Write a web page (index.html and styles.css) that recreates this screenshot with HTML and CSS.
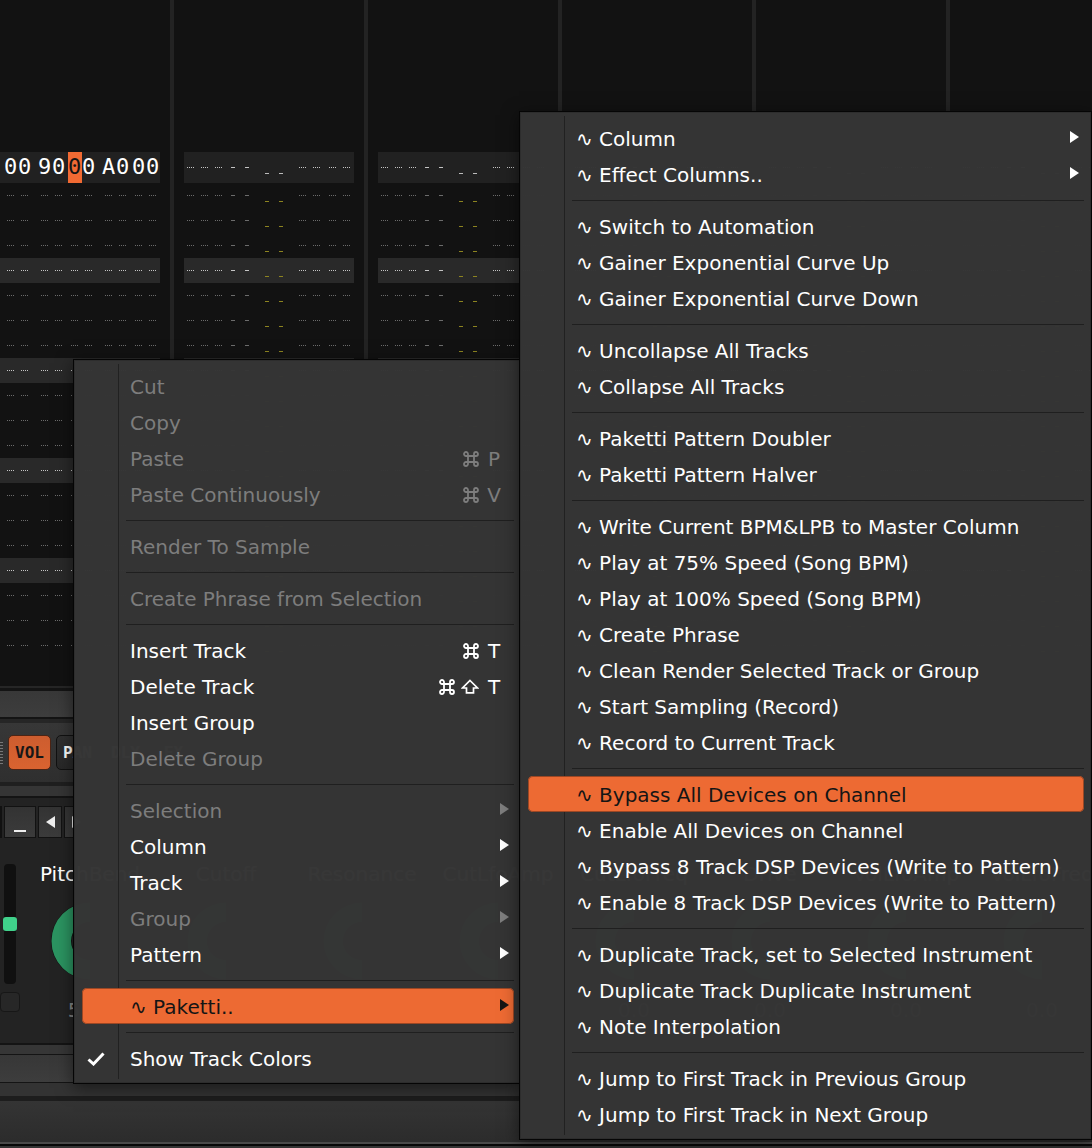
FILE: index.html
```html
<!DOCTYPE html>
<html lang="en">
<head>
<meta charset="utf-8">
<title>Pattern Editor</title>
<link rel="stylesheet" href="styles.css">
</head>
<body>
<svg class="defs" aria-hidden="true">
  <symbol id="cmd" viewBox="0 0 16 16"><path d="M5 5H11V11H5ZM5 5V3A2 2 0 1 0 3 5H5M11 5H13A2 2 0 1 0 11 3V5M11 11V13A2 2 0 1 0 13 11H11M5 11H3A2 2 0 1 0 5 13V11" fill="none" stroke="currentColor" stroke-width="1.8"/></symbol>
  <symbol id="shift" viewBox="0 0 18 16"><path d="M9 1.5L16.5 9H12.5V13.8H5.5V9H1.5Z" fill="none" stroke="currentColor" stroke-width="1.7"/></symbol>
  <symbol id="arrow" viewBox="0 0 9 12"><path d="M0 0L9 6L0 12Z" fill="currentColor"/></symbol>
  <symbol id="check" viewBox="0 0 18 14"><path d="M1.5 7.5L6.5 12L16.5 1.5" fill="none" stroke="currentColor" stroke-width="3"/></symbol>
  <symbol id="dial" viewBox="0 0 78 78"><circle cx="39" cy="39" r="39" fill="#141414"/><path d="M39 77.5A38.5 38.5 0 1 1 39 .5V20A19 19 0 1 0 39 58Z" fill="#2b9461"/><circle cx="39" cy="39" r="18" fill="#2a2a2a"/></symbol>
</svg>
<main class="app">
  <section class="tracks" id="tracks" aria-label="Pattern"></section>
  <div class="scrollbar"></div>
  <div class="toolbar">
    <span class="grip"></span>
    <button class="tool on">VOL</button>
    <button class="tool">PAN</button>
    <button class="tool">DLY</button>
    <button class="tool">FX</button>
  </div>
  <div class="strip"></div>
  <section class="devices">
    <div class="device-head">
      <span class="stub"></span>
      <button class="mini" aria-label="Minimize"><span class="minimize"></span></button>
      <button class="mini narrow" aria-label="Previous"><svg class="flip" width="9" height="12"><use href="#arrow"/></svg></button>
      <button class="mini narrow" aria-label="Next"><svg width="9" height="12"><use href="#arrow"/></svg></button>
      <span class="device-name">*Instr. Macros</span>
    </div>
    <div class="device-body">
      <div class="mixer"><div class="slider"><span class="thumb"></span></div><span class="box"></span></div>
      <div class="knobs" id="knobs"></div>
    </div>
  </section>
  <div class="gap-bar"></div>
  <div class="scroll-low"></div>
  <div class="gap-bar last"></div>
  <footer class="footer"></footer>
</main>
<div class="menu main-menu" role="menu" id="main-menu"></div>
<div class="menu sub-menu" role="menu" id="sub-menu"></div>
<script src="app.js"></script>
</body>
</html>
```
FILE: styles.css
```css
* { box-sizing: border-box; }
body {
  margin: 0;
  min-height: 100vh;
  background: #111;
  color: #fff;
  font: 20px/36px "DejaVu Sans", sans-serif;
  position: relative;
  overflow-x: hidden;
}
button { font: inherit; color: inherit; border: 0; padding: 0; background: none; }
.defs { position: absolute; width: 0; height: 0; }
.app { display: flex; flex-direction: column; min-height: 100vh; overflow: hidden; }

.tracks { display: flex; height: 686px; background: #121212; overflow: hidden; }
.track { flex: none; padding: 152px 10px 0; border-right: 4px solid #232323; }
.track:first-child { padding-left: 0; }
.row { display: flex; gap: 6px; height: 25px; color: #6c6c6c; }
.track:first-child .row { padding-left: 4px; }
.row.current { height: 31px; background: #212121; color: #c4c4c4; }
.row.beat { background: #292929; color: #c4c4c4; }
.pair { display: flex; gap: 2px; }
.group { display: flex; }
.cell { width: 14px; padding: 12px 0 0 3px; }
.current .cell { padding-top: 15px; }
.dots, .dash { display: block; height: 1px; }
.dots { width: 7px; background: repeating-linear-gradient(90deg, currentColor 0 1px, transparent 1px 2px); }
.dash { width: 4px; background: currentColor; }
.pair.low { padding-top: 6px; color: #8d8420; }
.current .low { color: #bbb; }
.current .digit { padding: 0; color: #fff; font: 22px/30px "DejaVu Sans Mono", monospace; }
.current .cursor { background: #f16a33; color: #141414; }

.scrollbar { height: 33px; border-top: 2px solid #262626; border-bottom: 2px solid #141414; background: linear-gradient(#141414 0 3px, #383838 3px, #3d3d3d); }
.toolbar { display: flex; align-items: center; gap: 5px; height: 63px; border-top: 4px solid #262626; background: linear-gradient(#373737, #2f2f2f); }
.grip { width: 3px; height: 22px; background: repeating-linear-gradient(#777 0 1px, transparent 1px 3px); }
.tool { width: 43px; height: 35px; border: 1px solid #111; border-radius: 5px; background: linear-gradient(#303030, #282828); font: bold 16px/32px "DejaVu Sans Mono", monospace; }
.tool.on { background: linear-gradient(#cd5d2f, #d96330); color: #171717; border-color: #4d2414; }
.strip { height: 16px; border-top: 4px solid #1f1f1f; border-bottom: 2px solid #141414; background: #353535; }
.devices { height: 245px; background: #232323; padding-top: 8px; overflow: hidden; }
.device-head { display: flex; gap: 2px; height: 32px; }
.stub { width: 2px; background: #111; }
.mini { width: 32px; height: 32px; border: 1px solid #121212; background: linear-gradient(#333, #3b3b3b); display: flex; align-items: center; justify-content: center; }
.mini.narrow { width: 24px; }
.mini svg { color: #eee; }
.flip { transform: scaleX(-1); }
.minimize { width: 12px; height: 2px; margin-top: 18px; background: #eee; }
.device-name { padding-left: 46px; font-weight: bold; color: #151515; }
.device-body { display: flex; gap: 2px; padding-top: 18px; }
.mixer { flex: none; width: 20px; display: flex; flex-direction: column; align-items: center; gap: 8px; padding-top: 8px; }
.slider { width: 12px; height: 120px; background: #101010; border-radius: 4px; display: flex; align-items: center; justify-content: center; }
.thumb { flex: none; width: 14px; height: 14px; border-radius: 3px; background: #40d18b; }
.box { width: 20px; height: 20px; border: 1px solid #171717; border-radius: 4px; background: #272727; }
.knobs { display: flex; }
.knob-cell { flex: none; width: 136px; display: flex; flex-direction: column; align-items: center; gap: 10px; }
.value { color: #888; line-height: 40px; }
.gap-bar { height: 11px; border-top: 2px solid #141414; background: #363636; }
.scroll-low { height: 29px; border: solid #141414; border-width: 1px 0; background: linear-gradient(#373737, #3d3d3d); }
.gap-bar.last { height: 18px; border-top: 0; border-bottom: 5px solid #1d1d1d; background: #333; }
.footer { flex: 1; min-height: 47px; background: linear-gradient(#343434, #2b2b2b); border-bottom: 2px solid #343434; box-shadow: inset 0 -2px #080808, inset 0 -4px #4a4a4a; }

.menu {
  position: absolute;
  display: flex;
  flex-direction: column;
  padding: 8px 7px 7px 8px;
  border: 1px solid #050505;
  background: rgba(53, 53, 53, .99);
  box-shadow: inset 0 0 0 1px #2d2d2d, 0 4px 16px rgba(0, 0, 0, .5);
}
.menu::before { content: ""; position: absolute; left: 44px; top: 4px; bottom: 4px; width: 1px; background: #212121; }
.main-menu { left: 73px; top: 359px; width: 449px; }
.sub-menu { left: 519px; top: 111px; right: 0; }
.item { position: relative; flex: none; display: flex; align-items: center; height: 36px; padding: 2px 13px 0 48px; text-align: left; white-space: nowrap; }
.label { flex: 1; }
.item:disabled { color: #7d7d7d; }
.item.hot { border-radius: 5px; background: #ed6a33; color: #151515; box-shadow: inset 0 0 0 1px #9c4724; }
.keys { display: flex; align-items: center; gap: 6px; }
.keys .letter { width: 14px; text-align: center; }
.keys svg + .letter { margin-left: 2px; }
.item .arrow { margin-right: -8px; margin-bottom: 4px; }
.check { position: absolute; left: 5px; top: 12px; }
.sep { flex: none; height: 1px; margin: 8px 0 7px 44px; border: 0; background: #1f1f1f; }
```
FILE: app.js
```js
const repeat = (n, s) => Array(n).fill(s).join("");
const cell = (kind) => `<span class="cell"><i class="${kind}"></i></span>`;
const group = (n, kind) => `<div class="group">${repeat(n, cell(kind))}</div>`;
const fx = `<div class="pair">${group(2, "dots")}${group(2, "dots")}</div>`;
const digit = (c) => `<span class="cell digit">${c}</span>`;
const digits = (s) => `<div class="group">${[...s].map(digit).join("")}</div>`;

const typedRow = `${digits("00")}<div class="pair">${digits("90")}<div class="group"><span class="cell digit cursor">0</span>${digit("0")}</div></div><div class="pair">${digits("A0")}${digits("00")}</div>`;
const fxRow = group(2, "dots") + fx + fx;
const noteRow = `<div class="pair">${group(3, "dots")}${group(2, "dash")}</div><div class="pair low">${group(2, "dash")}</div>${fx}`;

const track = (first) => {
  let rows = "";
  for (let i = 0; i < 20; i++) {
    const kind = i === 0 ? "current" : i % 4 === 0 ? "beat" : "";
    const body = !first ? noteRow : i === 0 ? typedRow : fxRow;
    rows += `<div class="row ${kind}">${body}</div>`;
  }
  return `<div class="track">${rows}</div>`;
};
document.getElementById("tracks").innerHTML = track(true) + repeat(5, track(false));

const macros = ["PitchBend", "Cutoff", "Resonance", "CutLfoAmp", "CutLfoFreq", "Drive", "VolLfoAmp", "VolLfoFreq"];
document.getElementById("knobs").innerHTML = macros.map((name, i) =>
  `<div class="knob-cell"><span>${name}</span><svg width="78" height="78"><use href="#dial"/></svg><span class="value">${i ? "0.0" : "50.0"}</span></div>`
).join("");

const keyIcons = {
  "⌘": '<svg width="16" height="16"><use href="#cmd"/></svg>',
  "⇧": '<svg width="18" height="16"><use href="#shift"/></svg>'
};
// Item flags: off = disabled, sub = opens a submenu, hot = highlighted, check = ticked.
const item = ([label, flags = "", keys = ""]) => {
  const has = (f) => flags.includes(f);
  const keyHtml = [...keys].map((k) => keyIcons[k] || `<span class="letter">${k}</span>`).join("");
  return `<button role="menuitem" class="item ${has("hot") ? "hot" : ""}" ${has("off") ? "disabled" : ""}>` +
    (has("check") ? '<svg class="check" width="18" height="14"><use href="#check"/></svg>' : "") +
    `<span class="label">${label.replace("&", "&amp;")}</span>` +
    (keys ? `<span class="keys">${keyHtml}</span>` : "") +
    (has("sub") ? '<svg class="arrow" width="9" height="12"><use href="#arrow"/></svg>' : "") +
    "</button>";
};
const fill = (id, groups) => {
  document.getElementById(id).innerHTML = groups.map((g) => g.map(item).join("")).join('<hr class="sep">');
};

fill("main-menu", [
  [["Cut", "off"], ["Copy", "off"], ["Paste", "off", "⌘P"], ["Paste Continuously", "off", "⌘V"]],
  [["Render To Sample", "off"]],
  [["Create Phrase from Selection", "off"]],
  [["Insert Track", "", "⌘T"], ["Delete Track", "", "⌘⇧T"], ["Insert Group"], ["Delete Group", "off"]],
  [["Selection", "off sub"], ["Column", "sub"], ["Track", "sub"], ["Group", "off sub"], ["Pattern", "sub"]],
  [["∿ Paketti..", "hot sub"]],
  [["Show Track Colors", "check"]]
]);
const tool = (label, flags) => ["∿ " + label, flags];
fill("sub-menu", [
  [tool("Column", "sub"), tool("Effect Columns..", "sub")],
  [tool("Switch to Automation"), tool("Gainer Exponential Curve Up"), tool("Gainer Exponential Curve Down")],
  [tool("Uncollapse All Tracks"), tool("Collapse All Tracks")],
  [tool("Paketti Pattern Doubler"), tool("Paketti Pattern Halver")],
  [tool("Write Current BPM&LPB to Master Column"), tool("Play at 75% Speed (Song BPM)"), tool("Play at 100% Speed (Song BPM)"),
   tool("Create Phrase"), tool("Clean Render Selected Track or Group"), tool("Start Sampling (Record)"), tool("Record to Current Track")],
  [tool("Bypass All Devices on Channel", "hot"), tool("Enable All Devices on Channel"),
   tool("Bypass 8 Track DSP Devices (Write to Pattern)"), tool("Enable 8 Track DSP Devices (Write to Pattern)")],
  [tool("Duplicate Track, set to Selected Instrument"), tool("Duplicate Track Duplicate Instrument"), tool("Note Interpolation")],
  [tool("Jump to First Track in Previous Group"), tool("Jump to First Track in Next Group")]
]);
```
